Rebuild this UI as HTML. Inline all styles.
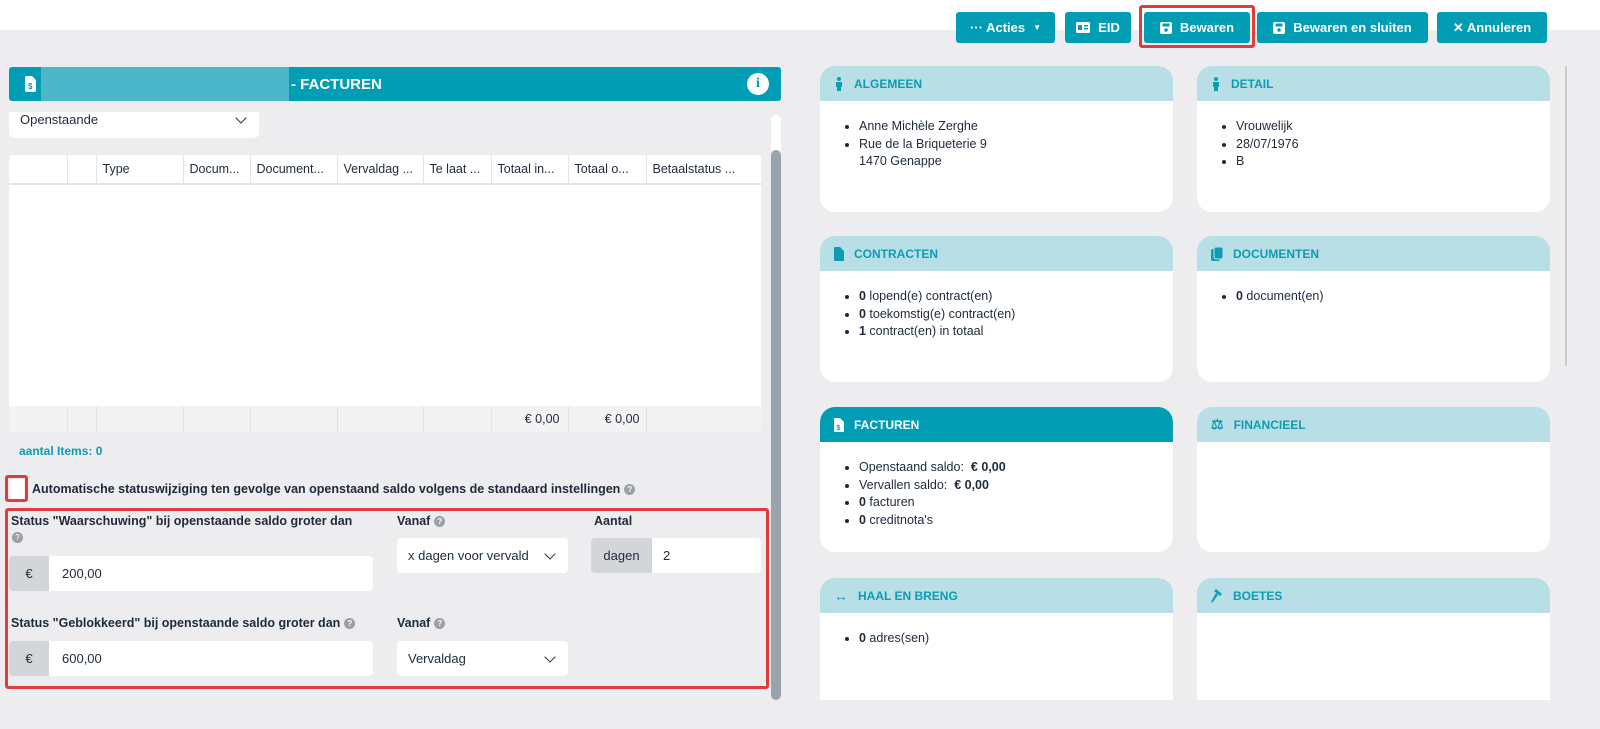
<!DOCTYPE html>
<html><head><meta charset="utf-8"><style>
*{box-sizing:border-box;margin:0;padding:0}
body{width:1600px;height:729px;background:#ededef;font-family:"Liberation Sans",sans-serif;font-size:13px;color:#1d2a3a;position:relative;overflow:hidden}
.abs{position:absolute}
.top{left:0;top:0;width:1600px;height:30px;background:#fff}
.btn{position:absolute;top:12px;height:31px;background:#009db5;color:#fff;font-weight:bold;font-size:13px;border-radius:3px;display:flex;align-items:center;justify-content:center;gap:8px}
.hdr{left:9px;top:67px;width:772px;height:34px;background:#009db5;border-radius:3px;color:#fff;font-weight:bold;font-size:15px}
.card{position:absolute;width:353px;background:#fff;border-radius:15px;overflow:hidden}
.card .ch{height:35px;background:#b8dfe6;color:#0e9bb3;font-weight:bold;font-size:12px;display:flex;align-items:center;padding-left:14px;gap:10px}
.card.act .ch{background:#009db5;color:#fff}
.card ul{margin:17px 0 0 39px;line-height:17.5px;font-size:12.5px}
th,td{border-right:1px solid #e2e4e6;text-align:left;font-weight:normal;padding-left:6px;white-space:nowrap}
.lbl{font-size:12.5px;font-weight:bold;position:absolute}
.q{display:inline-block;width:11px;height:11px;border-radius:50%;background:#9aa0a6;color:#fff;font-size:8px;text-align:center;line-height:11px;vertical-align:1px;margin-left:4px}
.inp{position:absolute;background:#fff;border-radius:4px;height:35px;display:flex;align-items:center;font-size:13px}
.add{background:#d3d6d9;height:100%;display:flex;align-items:center;justify-content:center;border-radius:4px 0 0 4px}
.chev{position:absolute;right:14px;top:12px;width:8px;height:8px;border-right:1.5px solid #333;border-bottom:1.5px solid #333;transform:rotate(45deg)}
</style></head><body>
<div class="abs top"></div>
<div class="btn" style="left:956px;width:99px">··· Acties <span style="font-size:8px">▼</span></div>
<div class="btn" style="left:1065px;width:66px"><svg width="14" height="11"><rect width="14" height="11" rx="1.5" fill="#fff"/><rect x="2" y="3" width="4" height="5" fill="#009db5"/><rect x="8" y="3" width="4" height="1.5" fill="#009db5"/><rect x="8" y="6" width="4" height="1.5" fill="#009db5"/></svg> EID</div>
<div class="abs" style="left:1139px;top:5px;width:116px;height:43px;border:3px solid #e03c3c;border-radius:3px"></div>
<div class="btn" style="left:1144px;width:106px"><svg width="12" height="12"><rect width="12" height="12" rx="2" fill="#fff"/><rect x="2.5" y="1.5" width="7" height="3" fill="#009db5"/><circle cx="6" cy="8" r="1.8" fill="#009db5"/></svg> Bewaren</div>
<div class="btn" style="left:1257px;width:171px"><svg width="12" height="12"><rect width="12" height="12" rx="2" fill="#fff"/><rect x="2.5" y="1.5" width="7" height="3" fill="#009db5"/><circle cx="6" cy="8" r="1.8" fill="#009db5"/></svg> Bewaren en sluiten</div>
<div class="btn" style="left:1437px;width:110px">✕ Annuleren</div>

<div class="abs hdr">
<svg class="abs" style="left:16px;top:9px" width="11" height="16"><path d="M0 2a2 2 0 0 1 2-2h5l4 4v10a2 2 0 0 1-2 2H2a2 2 0 0 1-2-2z" fill="#fff"/><text x="3" y="13" font-size="8" fill="#009db5" font-family="Liberation Sans">$</text></svg>
<div class="abs" style="left:32px;top:0;width:248px;height:34px;background:#4cb7c8"></div>
<span class="abs" style="left:282px;top:9px">- FACTUREN</span>
<div class="abs" style="left:738px;top:6px;width:22px;height:22px;border-radius:50%;background:#fff;color:#009db5;text-align:center;line-height:22px;font-size:14px;font-weight:bold;font-family:'Liberation Serif',serif">i</div>
</div>

<div class="abs" style="left:9px;top:112px;width:250px;height:26px;background:#fff;border-radius:0 0 5px 5px;padding-left:11px;font-size:13px">Openstaande<div class="chev" style="top:2px"></div></div>

<div class="abs" style="left:771px;top:115px;width:10px;height:585px;background:#fff;border-radius:5px"></div>
<div class="abs" style="left:771px;top:150px;width:10px;height:550px;background:#9aa4ad;border-radius:5px"></div>

<div class="abs" style="left:9px;top:155px;width:752px;height:277px;background:#fff;border-radius:4px;overflow:hidden">
<table style="border-collapse:collapse;width:752px;font-size:12.5px;height:277px">
<tr style="height:29px;border-bottom:2px solid #e2e4e6"><th style="width:58px"></th><th style="width:29px"></th><th style="width:87px">Type</th><th style="width:67px">Docum...</th><th style="width:87px">Document...</th><th style="width:86px">Vervaldag ...</th><th style="width:68px">Te laat ...</th><th style="width:77px">Totaal in...</th><th style="width:78px">Totaal o...</th><th style="border:none">Betaalstatus ...</th></tr>
<tr><td colspan="10" style="border:none"></td></tr>
<tr style="height:26px;background:#f3f3f4;font-weight:bold"><td></td><td></td><td></td><td></td><td></td><td></td><td></td><td style="text-align:right;padding-right:8px">€ 0,00</td><td style="text-align:right;padding-right:6px">€ 0,00</td><td style="border:none"></td></tr>
</table></div>

<div class="abs" style="left:19px;top:444px;color:#0e9bb3;font-weight:bold;font-size:12px">aantal Items: 0</div>
<div class="abs" style="left:5px;top:475px;width:23px;height:27px;border:3px solid #e03c3c;border-radius:3px"></div>
<div class="abs" style="left:10px;top:479px;width:14px;height:20px;background:#fff;border-radius:3px"></div>
<div class="abs" style="left:32px;top:482px;font-size:12.5px;font-weight:bold">Automatische statuswijziging ten gevolge van openstaand saldo volgens de standaard instellingen<span class="q">?</span></div>

<div class="abs" style="left:5px;top:508px;width:764px;height:181px;border:3px solid #e03c3c;border-radius:3px"></div>
<div class="lbl" style="left:11px;top:514px">Status "Waarschuwing" bij openstaande saldo groter dan</div>
<span class="q abs" style="left:8px;top:532px">?</span>
<div class="inp" style="left:9px;top:556px;width:364px"><div class="add" style="width:40px">€</div><span style="margin-left:13px">200,00</span></div>
<div class="lbl" style="left:397px;top:514px">Vanaf<span class="q">?</span></div>
<div class="inp" style="left:397px;top:538px;width:171px;padding-left:11px">x dagen voor vervald<div class="chev"></div></div>
<div class="lbl" style="left:594px;top:514px">Aantal</div>
<div class="inp" style="left:591px;top:538px;width:170px"><div class="add" style="width:61px">dagen</div><span style="margin-left:11px">2</span></div>

<div class="lbl" style="left:11px;top:616px">Status "Geblokkeerd" bij openstaande saldo groter dan<span class="q">?</span></div>
<div class="inp" style="left:9px;top:641px;width:364px"><div class="add" style="width:40px">€</div><span style="margin-left:13px">600,00</span></div>
<div class="lbl" style="left:397px;top:616px">Vanaf<span class="q">?</span></div>
<div class="inp" style="left:397px;top:641px;width:171px;padding-left:11px">Vervaldag<div class="chev"></div></div>

<div class="abs" style="left:1565px;top:66px;width:2px;height:300px;background:#ccc"></div>

<div class="card" style="left:820px;top:66px;height:146px"><div class="ch"><svg width="10" height="14"><circle cx="5" cy="2" r="2" fill="#0e9bb3"/><path d="M2 5h6v5H7v4H3v-4H2z" fill="#0e9bb3"/></svg>ALGEMEEN</div><ul><li>Anne Michèle Zerghe</li><li>Rue de la Briqueterie 9<br>1470 Genappe</li></ul></div>
<div class="card" style="left:1197px;top:66px;height:146px"><div class="ch"><svg width="10" height="14"><circle cx="5" cy="2" r="2" fill="#0e9bb3"/><path d="M2 5h6v5H7v4H3v-4H2z" fill="#0e9bb3"/></svg>DETAIL</div><ul><li>Vrouwelijk</li><li>28/07/1976</li><li>B</li></ul></div>
<div class="card" style="left:820px;top:236px;height:146px"><div class="ch"><svg width="10" height="14"><path d="M0 1a1 1 0 0 1 1-1h5l4 4v9a1 1 0 0 1-1 1H1a1 1 0 0 1-1-1z" fill="#0e9bb3"/></svg>CONTRACTEN</div><ul><li><b>0</b> lopend(e) contract(en)</li><li><b>0</b> toekomstig(e) contract(en)</li><li><b>1</b> contract(en) in totaal</li></ul></div>
<div class="card" style="left:1197px;top:236px;height:146px"><div class="ch"><svg width="12" height="14"><rect x="0" y="2" width="9" height="12" rx="2" fill="#0e9bb3"/><rect x="3" y="0" width="9" height="12" rx="2" fill="#0e9bb3" stroke="#b8dfe6"/></svg>DOCUMENTEN</div><ul><li><b>0</b> document(en)</li></ul></div>
<div class="card act" style="left:820px;top:407px;height:145px"><div class="ch"><svg width="10" height="14"><path d="M0 1a1 1 0 0 1 1-1h5l4 4v9a1 1 0 0 1-1 1H1a1 1 0 0 1-1-1z" fill="#fff"/><text x="2.5" y="12" font-size="7" fill="#009db5">$</text></svg>FACTUREN</div><ul><li>Openstaand saldo: &nbsp;<b>€ 0,00</b></li><li>Vervallen saldo: &nbsp;<b>€ 0,00</b></li><li><b>0</b> facturen</li><li><b>0</b> creditnota's</li></ul></div>
<div class="card" style="left:1197px;top:407px;height:145px"><div class="ch"><span style="font-size:14px">⚖</span>FINANCIEEL</div></div>
<div class="card" style="left:820px;top:578px;height:122px;border-radius:15px 15px 0 0"><div class="ch"><span style="font-size:14px">↔</span>HAAL EN BRENG</div><ul><li><b>0</b> adres(sen)</li></ul></div>
<div class="card" style="left:1197px;top:578px;height:122px;border-radius:15px 15px 0 0"><div class="ch"><svg width="12" height="14"><path d="M5 0l6 5-2 2-6-5z M5 4l2 2-6 8-1-1z" fill="#0e9bb3"/></svg>BOETES</div></div>
</body></html>
